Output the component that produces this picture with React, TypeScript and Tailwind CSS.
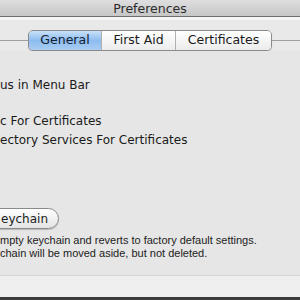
import React from 'react';

const tabs = [
  { label: 'General', w: 'w-[72px]', active: true },
  { label: 'First Aid', w: 'w-[74px]', active: false },
  { label: 'Certificates', w: 'w-[96px]', active: false },
];

export default function App() {
  return (
    <div className="w-[300px] h-[300px] overflow-hidden flex flex-col bg-[#e9e9e9] text-[#1a1a1a] font-['DejaVu_Sans',sans-serif]">
      {/* Title bar */}
      <div className="h-[17px] shrink-0 flex items-center justify-center bg-gradient-to-b from-[#dedede] to-[#c6c6c6] border-b border-[#6e6e6e]">
        <span className="text-[12.5px] leading-none text-[#2a2a2a] mt-[2px]">Preferences</span>
      </div>
      <div className="h-[3px] shrink-0 bg-[#f4f4f4]" />

      {/* Tab strip */}
      <div className="h-[21px] shrink-0 flex items-center mt-[10px]">
        <div className="w-[28px] h-px bg-[#a0a0a0]" />
        <div className="flex h-[21px] rounded-[5px] border border-[#8a8a8a] overflow-hidden shadow-[0_1px_1px_rgba(0,0,0,0.15)]">
          {tabs.map((t, i) => (
            <div
              key={t.label}
              className={`${t.w} flex items-center justify-center text-[12.5px] ${
                i > 0 ? 'border-l border-[#b0b0b0]' : ''
              } ${
                t.active
                  ? 'bg-gradient-to-b from-[#c9e0f8] via-[#8cbcef] to-[#a9cdf3] text-[#102030]'
                  : 'bg-gradient-to-b from-[#ffffff] to-[#ececec] text-[#1a1a1a]'
              }`}
            >
              {t.label}
            </div>
          ))}
        </div>
        <div className="flex-1 h-px bg-[#a0a0a0]" />
      </div>

      {/* Tab content */}
      <div className="flex-1 flex flex-col bg-[#e6e6e6] text-[12px]">
        <div className="mt-[24px] leading-[20px]">us in Menu Bar</div>
        <div className="mt-[16px] leading-[20px]">c For Certificates</div>
        <div className="leading-[19px]">ectory Services For Certificates</div>

        <div className="mt-[58px] flex">
          <div className="-ml-[30px] h-[21px] w-[89px] flex items-center justify-end pr-[10px] rounded-full border border-[#8a8a8a] bg-gradient-to-b from-[#ffffff] to-[#e4e4e4] shadow-[0_1px_1px_rgba(0,0,0,0.2)]">
            eychain
          </div>
        </div>
        <div className="mt-[5px] text-[11px] leading-[13px] text-[#222] font-['Liberation_Sans',sans-serif]">
          <div>mpty keychain and reverts to factory default settings.</div>
          <div>chain will be moved aside, but not deleted.</div>
        </div>
        <div className="flex-1" />
      </div>
      <div className="h-[22px] shrink-0 border-t border-[#d4d4d4] bg-[#efefef]" />
      <div className="h-[3px] shrink-0 bg-[#3c3c3c]" />
    </div>
  );
}
